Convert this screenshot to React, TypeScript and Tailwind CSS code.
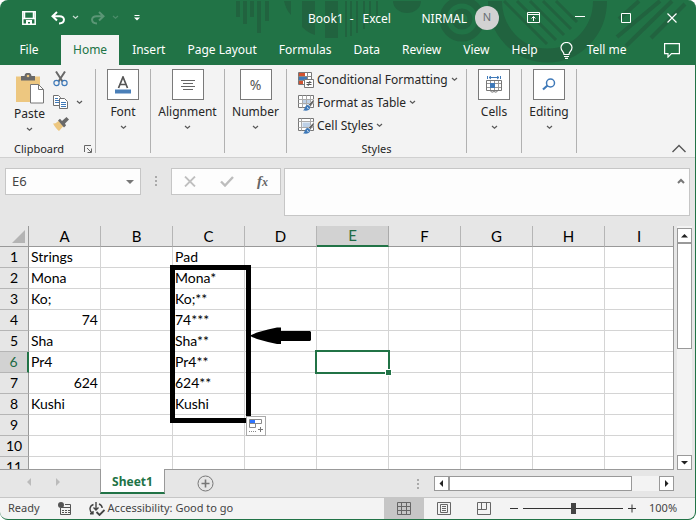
import { useState } from 'react';
import type { ReactNode } from 'react';

const COLUMNS = ['A', 'B', 'C', 'D', 'E', 'F', 'G', 'H', 'I'];

const ROWS: Record<string, string | number>[] = [
  { A: 'Strings', C: 'Pad' },
  { A: 'Mona', C: 'Mona*' },
  { A: 'Ko;', C: 'Ko;**' },
  { A: 74, C: '74***' },
  { A: 'Sha', C: 'Sha**' },
  { A: 'Pr4', C: 'Pr4**' },
  { A: 624, C: '624**' },
  { A: 'Kushi', C: 'Kushi' },
  {},
  {},
  {},
];

const TABS = ['Insert', 'Page Layout', 'Formulas', 'Data', 'Review', 'View', 'Help'];

function Chevron({ className = '' }: { className?: string }) {
  return (
    <svg width="7" height="5" viewBox="0 0 7 5" fill="none" stroke="currentColor" strokeWidth="1.2" className={`opacity-75 ${className}`}>
      <path d="M1 1l2.500 2.300L6 1" />
    </svg>
  );
}

function TitlePattern() {
  return (
    <svg width="696" height="65" className="absolute top-0 right-0 text-[#21633f]" fill="currentColor" aria-hidden="true">
      <path d="M237 1h4v16h-4zM244 1h4v23h-4zM251 1h4v16h-4zM258 1h4v32h-4zM266 1h4v20h-4zM285 1h7v14q-5-5-7-14z" />
      <path d="M303 1h13v34q-7-2-13-8zM326 1h13v37h-13zM346 1h2v36h-2zM351 1h2v35h-2zM357 1h2v32h-2zM364 1h2v28h-2zM370 1h2v23h-2zM377 1h2v16h-2z" />
      <path d="M394 1h28a14 12 0 0 1-28 0z" />
      <g fill="none" stroke="currentColor">
        <circle cx="463" cy="19" r="19" strokeWidth="7" />
        <circle cx="463" cy="19" r="8" strokeWidth="5" />
        <path d="M496 1a52 54 0 0 0 105 0" strokeWidth="14" />
        <path d="M505 1l43 43M518 1l39 39M531 1l34 34M544 1l28 28M557 1l21 21" strokeWidth="3" />
        <path d="M661 1l-43 36M640 1l-20 18" strokeWidth="4" />
        <path d="M673 1l-46 45M686 4l-34 34" strokeWidth="4" />
      </g>
    </svg>
  );
}

function TitleBar() {
  return (
    <header className="relative flex h-[35px] items-center text-white">
      <div className="flex flex-1 items-center pl-[22px]">
        <button aria-label="Save">
          <svg width="14" height="14" viewBox="0 0 14 14" fill="none" stroke="currentColor" strokeWidth="1.5">
            <path d="M.8.8h12.4v12.4H.8zM1 7.5h12M2.5 1v6M11.5 1v6" />
            <path d="M4 9h6v4.5H8V11H6v2.5H4z" fill="currentColor" stroke="none" />
          </svg>
        </button>
        <button aria-label="Undo" className="ml-[15px] flex items-center gap-[7px]">
          <svg width="14" height="14" viewBox="0 0 14 14" fill="none" stroke="currentColor" strokeWidth="2">
            <path d="M6 1L1.5 5.2 6 9.5M2 5.2h6.5c6 0 6 7-.5 7.3" />
          </svg>
          <Chevron />
        </button>
        <button aria-label="Redo" className="ml-3 flex items-center gap-[7px] text-[#5b9676]">
          <svg width="14" height="14" viewBox="0 0 14 14" fill="none" stroke="currentColor" strokeWidth="2">
            <path d="M8 1l4.500 4.200L8 9.500M12 5.200H5.500c-6 0-6 7 .5 7.300" />
          </svg>
          <Chevron />
        </button>
        <button aria-label="Customize Quick Access Toolbar" className="ml-[15px]">
          <svg width="6" height="6" viewBox="0 0 6 6" fill="currentColor">
            <path d="M.5 0h5v1h-5zM0 2.500h6L3 5.500z" />
          </svg>
        </button>
      </div>
      <h1 className="flex gap-[6px] pt-[2px] text-[12px]">
        <span>Book1</span>
        <span>-</span>
        <span className="pl-[3px]">Excel</span>
      </h1>
      <div className="flex flex-1 items-center justify-end pr-[18px] text-[12px]">
        <span className="pt-[2px]">NIRMAL</span>
        <span className="ml-2 flex size-6 items-center justify-center rounded-full bg-[#d2d2d2] text-[11px] text-[#6a7075]">N</span>
        <button aria-label="Ribbon display options" className="ml-7">
          <svg width="13" height="11" viewBox="0 0 13 11" fill="none" stroke="currentColor">
            <path d="M.5.500h12v10H.5zM.5 2.500h12M6.500 9V4.500M4.500 6.500l2-2 2 2" />
          </svg>
        </button>
        <button aria-label="Minimize" className="ml-[35px]">
          <svg width="10" height="10" stroke="currentColor"><path d="M0 3.500h10" /></svg>
        </button>
        <button aria-label="Maximize" className="ml-9">
          <svg width="10" height="10" fill="none" stroke="currentColor"><path d="M.5.500h9v9h-9z" /></svg>
        </button>
        <button aria-label="Close" className="ml-9">
          <svg width="10" height="10" stroke="currentColor" strokeWidth="1.200"><path d="M.5.500l9 9M9.500.500l-9 9" /></svg>
        </button>
      </div>
    </header>
  );
}

function TabBar() {
  return (
    <nav className="relative flex h-[30px] items-stretch text-[12px] text-white">
      <button className="w-[61px] pr-[3px]">File</button>
      <button className="bg-[#f3f3f3] px-3 text-[#217346]">Home</button>
      <div className="flex flex-1 items-center gap-[22px] pl-[13px]">
        {TABS.map((tab) => (
          <button key={tab}>{tab}</button>
        ))}
        <button className="flex items-center gap-[14px]">
          <svg width="13" height="17" viewBox="0 0 13 17" fill="none" stroke="currentColor" strokeWidth="1.200">
            <path d="M4 12.500c0-3-3-3.500-3-7a5.500 5 0 0 1 11 0c0 3.500-3 4-3 7zM4 14.500h5M5 16.300h3" />
          </svg>
          Tell me
        </button>
      </div>
      <button aria-label="Comments" className="pr-[15px]">
        <svg width="16" height="15" viewBox="0 0 16 15" fill="none" stroke="currentColor" strokeWidth="1.200">
          <path d="M.6.600h14.800v10H7.500l-3.500 3.500v-3.500H.6z" />
        </svg>
      </button>
    </nav>
  );
}

function RibbonGroup({ label, width, children }: { label: string; width: string; children: ReactNode }) {
  return (
    <div className={`flex shrink-0 flex-col items-center border-r border-[#b1b1b1] ${width}`}>
      <button className="flex flex-col items-center">
        <span className="flex h-[31px] w-8 items-center justify-center border border-[#7a7a7a] bg-white">{children}</span>
        <span className="mt-1 leading-4">{label}</span>
        <Chevron className="mt-[5px]" />
      </button>
    </div>
  );
}

function StyleButton({ label, children }: { label: string; children: ReactNode }) {
  return (
    <button className="flex h-[23px] items-center gap-[3px]">
      <svg width="16" height="16" viewBox="0 0 16 16" fill="none">{children}</svg>
      {label}
      <Chevron />
    </button>
  );
}

function StyledGridIcon({ dense = false }: { dense?: boolean }) {
  return (
    <>
      <path d="M.5.500h15v12H.5z" fill="#fff" stroke="#777" />
      <path d="M4.500 4.500h8v5h-8z" fill="#bdd0e6" />
      <path d={dense ? 'M.5 4.500h15M.5 8.500h15M4.500.500v12M8.500.500v12M12.500.500v12' : 'M.5 3.500h15M.5 9.500h15M3.500.500v12M12.500.500v12'} stroke="#aaa" />
      <path d="M16 4l-5.500 5.500 2 2 3.500-4.500z" fill="#666" stroke="#f3f3f3" strokeWidth=".5" />
      <path d="M5 15.500c2-1 1.500-5 4.500-5.500 3 0 3.500 4 1 5-1.500 1-3.500.5-5.500.5z" fill="#3f79b8" />
      <path d="M9 12.500l1.500 1" stroke="#fff" />
    </>
  );
}

function ClipboardGroup() {
  return (
    <div className="relative flex w-24 shrink-0 flex-col border-r border-[#b1b1b1]">
      <div className="flex flex-1">
        <button className="ml-[14px] flex w-[31px] flex-col items-center pt-1">
          <svg width="29" height="31" viewBox="0 0 29 31">
            <path d="M1 3.500h24V29H1z" fill="#edc780" />
            <path d="M6 3h3.500a3.500 3.200 0 0 1 7 0H20v4.500H6z" fill="#696969" />
            <circle cx="13" cy="3" r="1.300" fill="#edc780" />
            <path d="M15.500 11.500h8l5 5v13.500h-13z" fill="#fff" stroke="#777" />
            <path d="M23.500 11.500v5h5" fill="none" stroke="#777" />
          </svg>
          <span className="mt-[2px] leading-4">Paste</span>
          <Chevron className="mt-[5px]" />
        </button>
        <div className="ml-2 flex flex-col items-start">
          <button aria-label="Cut" className="mt-[2px]">
            <svg width="15" height="16" viewBox="0 0 15 16" fill="none">
              <path d="M3 .5l6.500 10M12 .5l-6.500 10" stroke="#686868" strokeWidth="2" />
              <circle cx="3.500" cy="12" r="2.600" stroke="#3f79b8" strokeWidth="1.200" />
              <circle cx="11.500" cy="12" r="2.600" stroke="#3f79b8" strokeWidth="1.200" />
            </svg>
          </button>
          <button aria-label="Copy" className="mt-2 flex items-center gap-2">
            <svg width="15" height="14" viewBox="0 0 15 14" fill="#fff">
              <path d="M.5.500h5l2 2v8h-7z" stroke="#707070" />
              <path d="M2 3.500h3M2 5.500h4M2 7.500h4" stroke="#3f79b8" />
              <path d="M6.500 3.500h5l3 3v7h-8z" stroke="#707070" />
              <path d="M8 7.500h5M8 9.500h5M8 11.500h5" stroke="#3f79b8" />
            </svg>
            <Chevron />
          </button>
          <button aria-label="Format Painter" className="mt-2">
            <svg width="16" height="14" viewBox="0 0 16 14">
              <path d="M0 6.500c3 .5 4-1.500 5.500-2.500l5 5-4.500 5c-2-1.500-4-4-6-7.500z" fill="#edc780" />
              <path d="M5 3.500l2-1.800L9 4l4.500-4L16 2.500 12 6.500l1 2-2 2z" fill="#696969" />
            </svg>
          </button>
        </div>
      </div>
      <div className="-mb-1 flex h-4 items-center pr-[3px] pl-[14px] text-[11px]">
        <span className="flex-1">Clipboard</span>
        <button aria-label="Clipboard options">
          <svg width="8" height="8" fill="none" stroke="#666">
            <path d="M.5 7V.5H7M3 3l4 4M7.500 3.500v4h-4" />
          </svg>
        </button>
      </div>
    </div>
  );
}

function Ribbon() {
  return (
    <section className="relative flex h-[93px] border-b border-[#d0d0d0] bg-[#f3f3f3] pt-1 pb-[4px] text-[12px] text-[#262626]">
      <ClipboardGroup />
      <RibbonGroup label="Font" width="w-[55px]">
        <svg width="16" height="18" viewBox="0 0 16 18">
          <path d="M3.500 12L8 1l4.500 11M5 8.500h6" fill="none" stroke="#555" strokeWidth="1.700" />
          <path d="M0 13.500h16v4H0z" fill="#4a7fb8" />
        </svg>
      </RibbonGroup>
      <RibbonGroup label="Alignment" width="w-[74px]">
        <svg width="14" height="10" stroke="#666"><path d="M0 .5h14M2 3.500h10M0 6.500h14M2 9.500h10" /></svg>
      </RibbonGroup>
      <RibbonGroup label="Number" width="w-[62px]">
        <span className="text-[14px] text-[#555]">%</span>
      </RibbonGroup>
      <div className="flex w-[180px] shrink-0 flex-col border-r border-[#b1b1b1]">
        <div className="-mt-px flex flex-1 flex-col items-start pl-[11px]">
          <StyleButton label="Conditional Formatting">
            <path d="M.5.500h13v12H.5z" fill="#fff" stroke="#777" />
            <path d="M1 1h6v3H1zM1 9h4v3H1z" fill="#d35230" />
            <path d="M1 5h8v3H1z" fill="#3f79b8" />
            <path d="M.5 4.500h13M.5 8.500h13M9.500.500v8" stroke="#888" />
            <path d="M6.500 7.500h9v8h-9z" fill="#fff" stroke="#777" />
            <path d="M8.500 10.500h5M8.500 12.500h5M12 9l-2 5" stroke="#555" />
          </StyleButton>
          <StyleButton label="Format as Table">
            <StyledGridIcon dense />
          </StyleButton>
          <StyleButton label="Cell Styles">
            <StyledGridIcon />
          </StyleButton>
        </div>
        <span className="-mb-1 h-4 text-center text-[11px] leading-4">Styles</span>
      </div>
      <RibbonGroup label="Cells" width="w-[55px]">
        <svg width="16" height="17" viewBox="0 0 16 17" fill="none">
          <path d="M1.500 0v3M14.500 0v3M3 1.500h10M5 0L3 1.500 5 3M11 0l2 1.500L11 3" stroke="#3f79b8" />
          <path d="M.5 4.500h15v10H.5z" stroke="#777" />
          <path d="M1 7.500h14M1 11.500h14M4.500 5v9M8.500 5v9M12.500 5v9" stroke="#999" />
          <path d="M4 7h5v5H4z" fill="#3f79b8" />
          <path d="M4 14.500q2 3 4 1 2 2 4-1" stroke="#777" />
        </svg>
      </RibbonGroup>
      <RibbonGroup label="Editing" width="w-[55px]">
        <svg width="14" height="13" viewBox="0 0 14 13" fill="none" stroke="#3f79b8">
          <circle cx="8.500" cy="5" r="4" strokeWidth="1.500" />
          <path d="M5.500 7.500L1 11.500" strokeWidth="2.200" />
        </svg>
      </RibbonGroup>
      <button aria-label="Collapse the ribbon" className="ml-auto self-end pr-[9px]">
        <svg width="14" height="9" fill="none" stroke="#555" strokeWidth="1.400"><path d="M.5 8L7 1.500 13.500 8" /></svg>
      </button>
    </section>
  );
}

function DotHandle({ className }: { className: string }) {
  return (
    <svg width="2" height="10" fill="#aaa" className={className} aria-hidden="true">
      <path d="M0 0h2v2H0zM0 4h2v2H0zM0 8h2v2H0z" />
    </svg>
  );
}

function FormulaBar() {
  const [cell, setCell] = useState('E6');
  const [formula, setFormula] = useState('');

  return (
    <section className="flex items-start bg-[#e6e6e6] px-[5px] py-[10px]">
      <div className="flex h-[27px] w-[136px] items-center border border-[#c6c6c6] bg-[#fdfdfd] px-1.5">
        <input
          aria-label="Name box"
          value={cell}
          onChange={(e) => setCell(e.target.value)}
          className="w-full min-w-0 bg-transparent text-[13px] text-[#444] outline-none"
        />
        <button aria-label="Choose a name">
          <svg width="8" height="4" fill="#777"><path d="M0 0h8L4 4z" /></svg>
        </button>
      </div>
      <DotHandle className="mx-[14px] mt-2" />
      <div className="flex h-[27px] w-[110px] items-center justify-between border border-[#c6c6c6] bg-[#fdfdfd] px-3">
        <button aria-label="Cancel">
          <svg width="12" height="11" fill="none" stroke="#c0c0c0" strokeWidth="1.800"><path d="M1 .5l10 10M11 .5l-10 10" /></svg>
        </button>
        <button aria-label="Enter">
          <svg width="14" height="11" fill="none" stroke="#bdbdbd" strokeWidth="2.400"><path d="M1 5.500l4 4L13 1" /></svg>
        </button>
        <button aria-label="Insert function" className="font-['Liberation_Serif',serif] text-[15px] leading-4 font-bold text-[#666] italic">
          f<span className="text-[12px]">x</span>
        </button>
      </div>
      <div className="ml-[3px] flex h-12 flex-1 items-start border border-[#c6c6c6] bg-[#fdfdfd]">
        <textarea
          aria-label="Formula bar"
          value={formula}
          onChange={(e) => setFormula(e.target.value)}
          className="h-full flex-1 resize-none bg-transparent px-1 text-[13px] outline-none"
        />
        <button aria-label="Collapse formula bar" className="mt-[9px] mr-1">
          <svg width="8" height="6" fill="none" stroke="#777" strokeWidth="2" className="block"><path d="M1 5l3-3 3 3" /></svg>
        </button>
      </div>
    </section>
  );
}

function Sheet() {
  return (
    <div className="relative min-w-0 flex-1 overflow-hidden border-r border-b border-[#999] bg-white font-[Lato,'Liberation_Sans',sans-serif]">
      <table className="w-full table-fixed border-separate border-spacing-0 text-[14px] leading-5 text-black">
        <colgroup>
          <col className="w-[29px]" />
          {COLUMNS.slice(0, -1).map((col) => (
            <col key={col} className="w-[72px]" />
          ))}
          <col />
        </colgroup>
        <thead>
          <tr className="h-[21px] bg-[#e6e6e6] text-[15px] leading-[19px]">
            <th aria-label="Select all" className="border-r border-b border-[#999] p-0">
              <svg width="13" height="13" fill="#b4b4b4" className="ml-3"><path d="M13 0v13H0z" /></svg>
            </th>
            {COLUMNS.map((col) => (
              <th
                key={col}
                className={
                  col === 'E'
                    ? 'border-r border-b-2 border-r-[#aaa] border-b-[#217346] bg-[#d2d2d2] p-0 font-normal text-[#1e6b45]'
                    : 'border-r border-b border-r-[#b5b5b5] border-b-[#999] p-0 pt-px font-normal last:border-r-0'
                }
              >
                {col}
              </th>
            ))}
          </tr>
        </thead>
        <tbody>
          {ROWS.map((row, i) => (
            <tr key={i} className="h-[21px]">
              <th
                className={
                  i === 5
                    ? 'border-r-2 border-b border-r-[#217346] border-b-[#b5b5b5] bg-[#d2d2d2] p-0 font-normal text-[#1e6b45]'
                    : 'border-r border-b border-r-[#999] border-b-[#b5b5b5] bg-[#e6e6e6] p-0 font-normal'
                }
              >
                {i + 1}
              </th>
              {COLUMNS.map((col) => {
                const selected = col === 'E' && i === 5;
                return (
                  <td
                    key={col}
                    className={`border-r border-b border-[#d4d4d4] px-[2px] py-0 last:border-r-0 ${
                      typeof row[col] === 'number' ? 'text-right' : 'text-left'
                    } ${selected ? 'relative' : ''}`}
                  >
                    {row[col]}
                    {selected && (
                      <span className="absolute -inset-[2px] border-2 border-[#217346]">
                        <span className="absolute -right-[4px] -bottom-[4px] size-[7px] border border-white bg-[#217346]" />
                      </span>
                    )}
                  </td>
                );
              })}
            </tr>
          ))}
        </tbody>
      </table>

      {/* Hand-drawn annotation over column C */}
      <div className="pointer-events-none absolute top-[39px] left-[170px] h-[158px] w-[81px] border-5 border-black" />
      <svg width="61" height="18" viewBox="0 0 61 18" className="pointer-events-none absolute top-[101px] left-[250px]">
        <path d="M0 8.500l7-3 11-3 9-2h4V4h29l1 1v8l-1 1H31v3h-4l-9-2-11-3-5-2z" />
      </svg>
      <button aria-label="Auto fill options" className="absolute top-[190px] left-[246px] border border-[#aaa] bg-white">
        <svg width="18" height="18" viewBox="0 0 18 18" fill="none">
          <path d="M2.500 2.500h12v4h-12zM2.500 6.500h6v4h-6z" stroke="#888" />
          <path d="M3 3h5v3H3z" fill="#2f75ff" />
          <path d="M2 14.500h7" stroke="#888" strokeDasharray="1 1" />
          <path d="M11 12.500h5M13.500 10v5" stroke="#777" />
        </svg>
      </button>
    </div>
  );
}

function ScrollArrow({ label, d }: { label: string; d: string }) {
  return (
    <button aria-label={label} className="flex size-[15px] shrink-0 items-center justify-center border border-[#999] bg-white">
      <svg width="7" height="7" fill="#222"><path d={d} /></svg>
    </button>
  );
}

function SheetTabs() {
  return (
    <div className="flex h-[28px] items-start border-b border-[#c6c6c6] bg-[#e6e6e6]">
      <div className="flex w-[100px] gap-[25px] pt-2 pl-[27px]">
        <button aria-label="Previous sheet">
          <svg width="4" height="8" fill="#bbb"><path d="M4 0v8L0 4z" /></svg>
        </button>
        <button aria-label="Next sheet">
          <svg width="4" height="8" fill="#bbb"><path d="M0 0v8l4-4z" /></svg>
        </button>
      </div>
      <button className="relative -mt-px h-[25px] w-[65px] border-x border-b-2 border-x-[#999] border-b-[#217346] bg-white pt-[2px] text-[12px] font-bold text-[#217346]">
        Sheet1
      </button>
      <button aria-label="New sheet" className="mt-[5px] ml-8">
        <svg width="17" height="17" fill="none" stroke="#777" className="block">
          <circle cx="8.500" cy="8.500" r="7.500" />
          <path d="M4.500 8.500h8M8.500 4.500v8" strokeWidth="1.600" />
        </svg>
      </button>
      <div className="ml-auto flex items-center pt-[6px] pr-[21px]">
        <DotHandle className="mr-[15px]" />
        <ScrollArrow label="Scroll left" d="M5 0v7L1.500 3.500z" />
        <div className="flex w-[210px] bg-[#f3f3f3]">
          <div className="h-[15px] w-[183px] border border-[#999] bg-white" />
        </div>
        <ScrollArrow label="Scroll right" d="M2 0v7l3.500-3.500z" />
      </div>
    </div>
  );
}

function StatusBar() {
  const [zoom, setZoom] = useState(100);

  return (
    <footer className="flex h-[21px] items-center bg-[#f3f3f3] pl-2 text-[11px] text-[#444]">
      <span>Ready</span>
      <button aria-label="Record macro" className="ml-[18px]">
        <svg width="14" height="14" viewBox="0 0 14 14" fill="none" stroke="#555">
          <path d="M2.500 6v6.500h10v-10H7M3 5.500h9.500" />
          <path d="M4 8.500h2M7 8.500h2M10 8.500h2M4 10.500h2M7 10.500h2M10 10.500h2" />
          <circle cx="3" cy="3" r="3" fill="#555" stroke="none" />
        </svg>
      </button>
      <button className="ml-[17px] flex items-center gap-[3px]">
        <svg width="16" height="14" viewBox="0 0 16 14" fill="none" stroke="#444" strokeWidth="1.400">
          <path d="M4.500 2.500C0 4 0 9 3.500 11.500M1 11.800h3V9M7 0v7.500M4.500 5.500L7 8l2.500-2.500M10 2c2 .8 3 2 3.200 4" />
          <path d="M7.500 10l3 3 5-5" strokeWidth="1.800" />
        </svg>
        Accessibility: Good to go
      </button>
      <div className="ml-auto flex h-full items-center">
        <button aria-label="Normal view" className="flex h-full w-10 items-center justify-center bg-[#c6c6c6]">
          <svg width="14" height="13" fill="none" stroke="#666"><path d="M.5.500h13v12H.5zM.5 4.500h13M.5 8.500h13M4.500.500v12M9.500.500v12" /></svg>
        </button>
        <button aria-label="Page layout view" className="flex h-full w-10 items-center justify-center">
          <svg width="14" height="13" fill="none" stroke="#666"><path d="M.5.500h13v12H.5zM3.500 2.500h7v8h-7zM5 4.500h4M5 6.500h4M5 8.500h4" /></svg>
        </button>
        <button aria-label="Page break preview" className="flex h-full w-10 items-center justify-center">
          <svg width="14" height="13" fill="none" stroke="#666"><path d="M.5.500h13v12H.5zM4.500.500v7M9.500.500v7M.5 7.500h9" /></svg>
        </button>
        <button aria-label="Zoom out" className="ml-[6px]" onClick={() => setZoom(Math.max(10, zoom - 10))}>
          <svg width="8" height="9" stroke="#333"><path d="M0 4.500h8" /></svg>
        </button>
        <input
          type="range"
          aria-label="Zoom"
          min={10}
          max={190}
          value={zoom}
          onChange={(e) => setZoom(Number(e.target.value))}
          className="mx-[5px] h-[11px] w-[100px] appearance-none bg-transparent [&::-webkit-slider-runnable-track]:h-px [&::-webkit-slider-runnable-track]:bg-[#333] [&::-webkit-slider-thumb]:-mt-[5px] [&::-webkit-slider-thumb]:h-[11px] [&::-webkit-slider-thumb]:w-[5px] [&::-webkit-slider-thumb]:appearance-none [&::-webkit-slider-thumb]:bg-[#444]"
        />
        <button aria-label="Zoom in" onClick={() => setZoom(Math.min(190, zoom + 10))}>
          <svg width="8" height="9" stroke="#333"><path d="M0 4.500h8M4 .5v8" /></svg>
        </button>
        <span className="w-[59px] pl-[13px]">{zoom}%</span>
      </div>
    </footer>
  );
}

export default function App() {
  return (
    <div className="h-screen bg-white pr-[2px] pb-[3px] font-['Noto_Sans','Open_Sans',sans-serif]">
      <main className="relative flex h-full flex-col overflow-hidden rounded-lg border-r border-b border-[#217346] bg-[#217346]">
        <TitlePattern />
        <TitleBar />
        <TabBar />
        <Ribbon />
        <FormulaBar />
        <div className="flex min-h-0 flex-1 bg-[#e6e6e6]">
          <Sheet />
          <div className="mx-[3px] flex w-[15px] flex-col bg-[#f3f3f3] pt-[2px]">
            <ScrollArrow label="Scroll up" d="M0 5.500h7L3.500 2z" />
            <div className="h-[106px] border border-[#999] bg-white" />
            <div className="flex-1" />
            <ScrollArrow label="Scroll down" d="M0 2h7L3.500 5.500z" />
          </div>
        </div>
        <SheetTabs />
        <StatusBar />
      </main>
    </div>
  );
}
